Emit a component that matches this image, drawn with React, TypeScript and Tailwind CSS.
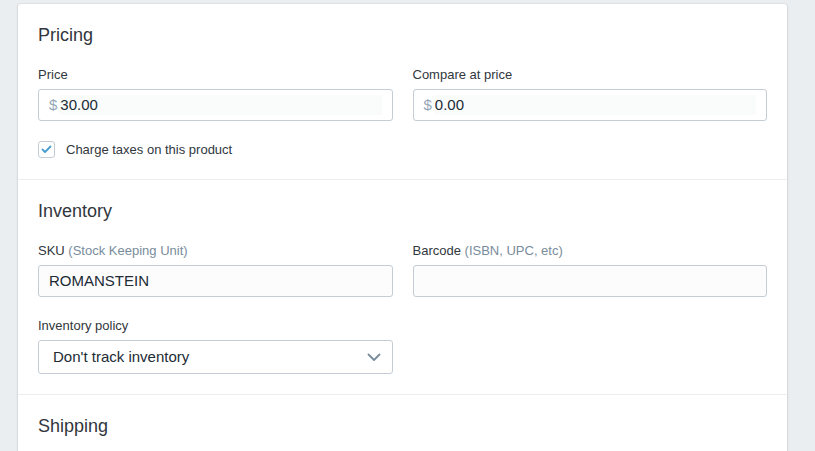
import React from "react";

const font = { fontFamily: '"Liberation Sans", Arial, sans-serif' };

function Label({ text, hint }: { text: string; hint?: string }) {
  return (
    <div className="text-[13px] leading-[17px] text-[#31373d] mb-[6px]">
      {text}
      {hint && <span className="text-[#798c9c]"> {hint}</span>}
    </div>
  );
}

function MoneyInput({ value }: { value: string }) {
  return (
    <div className="h-8 border border-[#c4cdd5] rounded-[3px] bg-white flex items-center pl-[10px] pr-[10px]">
      <span className="text-[15px] text-[#95a7b7] mr-[3px]">$</span>
      <div className="flex-1 h-5 bg-[#fafbfb] text-[15px] leading-5 text-[#212b35]">{value}</div>
    </div>
  );
}

function TextInput({ value }: { value?: string }) {
  return (
    <div className="h-8 border border-[#c4cdd5] rounded-[3px] bg-[#fcfcfc] flex items-center pl-[10px] text-[15px] text-[#212b35]">
      {value}
    </div>
  );
}

function Section({ title, children, cls }: { title: string; children?: React.ReactNode; cls: string }) {
  return (
    <div className={"px-5 pt-5 " + cls}>
      <div className="text-[18px] leading-[23px] text-[#31373d] mb-[19px]">{title}</div>
      {children}
    </div>
  );
}

export default function App() {
  return (
    <div className="w-[815px] h-[451px] bg-[#ebeef0] overflow-hidden pt-1 pl-[18px] flex flex-col" style={font}>
      <div className="w-[769px] flex-1 flex flex-col bg-white rounded-t-[3px] shadow-[0_0_0_1px_rgba(63,63,68,0.05),0_1px_3px_0_rgba(63,63,68,0.15)]">
        <Section title="Pricing" cls="pb-[21px] border-b border-[#ebeef0]">
          <div className="grid grid-cols-2 gap-5">
            <div>
              <Label text="Price" />
              <MoneyInput value="30.00" />
            </div>
            <div>
              <Label text="Compare at price" />
              <MoneyInput value="0.00" />
            </div>
          </div>
          <div className="flex items-center mt-5 h-[17px]">
            <div className="w-[17px] h-[17px] border border-[#c4cdd5] rounded-[3px] bg-white flex items-center justify-center">
              <svg width="11" height="9" viewBox="0 0 11 9" fill="none">
                <path d="M1.5 4.5 L4 7 L9.5 1.5" stroke="#479ccf" strokeWidth="1.8" strokeLinecap="round" strokeLinejoin="round" />
              </svg>
            </div>
            <span className="ml-[11px] text-[13px] text-[#31373d]">Charge taxes on this product</span>
          </div>
        </Section>
        <Section title="Inventory" cls="pb-5 border-b border-[#ebeef0]">
          <div className="grid grid-cols-2 gap-5">
            <div>
              <Label text="SKU" hint="(Stock Keeping Unit)" />
              <TextInput value="ROMANSTEIN" />
            </div>
            <div>
              <Label text="Barcode" hint="(ISBN, UPC, etc)" />
              <TextInput />
            </div>
          </div>
          <div className="grid grid-cols-2 gap-5 mt-5">
            <div>
              <Label text="Inventory policy" />
              <div className="h-[34px] border border-[#c4cdd5] rounded-[3px] bg-white flex items-center justify-between pl-[14px] pr-[11px] text-[15px] text-[#212b35]">
                <span>Don't track inventory</span>
                <svg width="14" height="9" viewBox="0 0 14 9" fill="none">
                  <path d="M1.5 1.5 L7 7 L12.5 1.5" stroke="#798c9c" strokeWidth="1.8" strokeLinecap="round" strokeLinejoin="round" />
                </svg>
              </div>
            </div>
          </div>
        </Section>
        <Section title="Shipping" cls="flex-1" />
      </div>
    </div>
  );
}
